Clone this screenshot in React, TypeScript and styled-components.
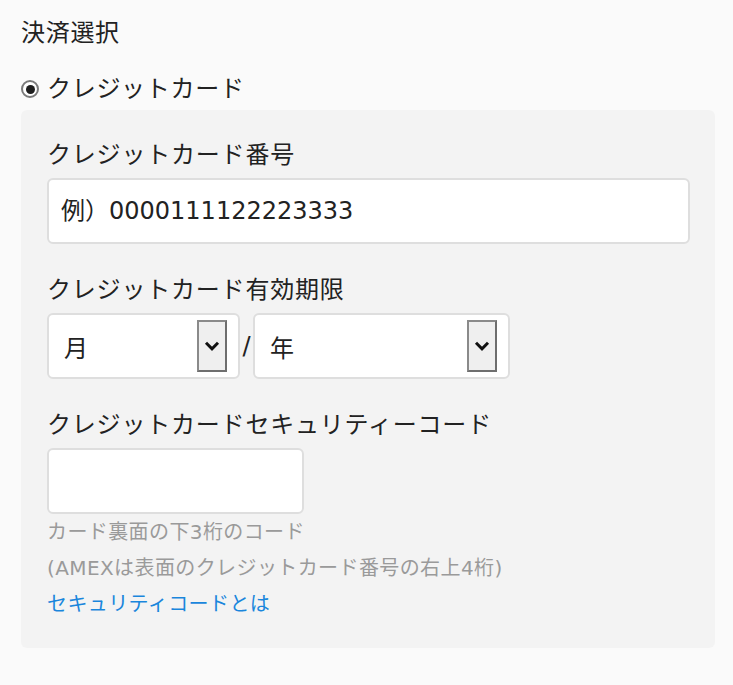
import * as React from "react";
import styled, { createGlobalStyle } from "styled-components";

const GlobalStyle = createGlobalStyle`
    html, body {
        margin: 0;
        padding: 0;
        background: #fafafa;
    }
    body {
        font-family: "DejaVu Sans", "Noto Sans CJK JP", sans-serif;
        color: #222;
    }
`;

const Page = styled.div`
    width: 733px;
    min-height: 685px;
    box-sizing: border-box;
    padding: 15px 18px 0 21px;
`;

const Title = styled.div`
    font-size: 24px;
    line-height: 36px;
    letter-spacing: 0.7px;
`;

const RadioRow = styled.label`
    display: flex;
    align-items: center;
    gap: 8px;
    margin-top: 20px;
    font-size: 24px;
    line-height: 36px;
    letter-spacing: 0.7px;
`;

const RadioMark = styled.span<{ checked: boolean }>`
    width: 18px;
    height: 18px;
    box-sizing: border-box;
    border: 2px solid #7a7a7a;
    border-radius: 50%;
    background: #fff;
    display: flex;
    align-items: center;
    justify-content: center;
    &::after {
        content: "";
        width: 9px;
        height: 9px;
        border-radius: 50%;
        background: ${props => props.checked ? "#1e1e1e" : "transparent"};
    }
`;

const Panel = styled.div`
    margin-top: 3px;
    background: #f3f3f3;
    border-radius: 6px;
    padding: 27px 25px 26px 26px;
`;

const Field = styled.div<{ first?: boolean }>`
    margin-top: ${props => props.first ? "0" : "28px"};
`;

const Label = styled.div`
    font-size: 24px;
    line-height: 36px;
    letter-spacing: 0.8px;
    margin-bottom: 5px;
`;

const TextInput = styled.input<{ w?: number }>`
    display: block;
    box-sizing: border-box;
    width: ${props => props.w ? `${props.w}px` : "100%"};
    height: 66px;
    border: 2px solid #dedede;
    border-radius: 6px;
    background: #fff;
    padding: 0 12px;
    font-family: inherit;
    font-size: 24px;
    color: #222;
    outline: none;
    &::placeholder {
        color: #222;
    }
`;

const SelectRow = styled.div`
    display: flex;
    align-items: center;
`;

const SelectBox = styled.div<{ w: number }>`
    width: ${props => props.w}px;
    height: 66px;
    box-sizing: border-box;
    border: 2px solid #dedede;
    border-radius: 6px;
    background: #fff;
    display: flex;
    align-items: center;
    justify-content: space-between;
    padding: 0 11px 0 15px;
    font-size: 24px;
`;

const ArrowButton = styled.span`
    flex: 0 0 30px;
    width: 30px;
    height: 52px;
    box-sizing: border-box;
    border: 2px solid #8a8a8a;
    border-right-color: #6e6e6e;
    border-bottom-color: #6e6e6e;
    background: #efefef;
    display: flex;
    align-items: center;
    justify-content: center;
    svg {
        flex: none;
        display: block;
    }
`;

const Slash = styled.span`
    width: 13px;
    text-align: center;
    font-size: 24px;
    line-height: 36px;
`;

const HelpText = styled.div`
    font-size: 20px;
    line-height: 36px;
    letter-spacing: 0.4px;
    color: #9a9a9a;
`;

const HelpLink = styled.a`
    display: block;
    font-size: 20px;
    line-height: 36px;
    letter-spacing: 0.4px;
    color: #1a86dc;
    text-decoration: none;
`;

const Chevron = () => (
    <svg width="16" height="10" viewBox="0 0 16 10">
        <path d="M2 1.8 L8 7.8 L14 1.8" fill="none" stroke="#111" strokeWidth="3" />
    </svg>
);

const Select = ({ w, text }: { w: number; text: string }) => (
    <SelectBox w={w}>
        <span>{text}</span>
        <ArrowButton><Chevron /></ArrowButton>
    </SelectBox>
);

export default function App() {
    return (
        <Page>
            <GlobalStyle />
            <Title>決済選択</Title>
            <RadioRow>
                <RadioMark checked={true} />
                クレジットカード
            </RadioRow>
            <Panel>
                <Field first>
                    <Label>クレジットカード番号</Label>
                    <TextInput placeholder="例）0000111122223333" />
                </Field>
                <Field>
                    <Label>クレジットカード有効期限</Label>
                    <SelectRow>
                        <Select w={193} text="月" />
                        <Slash>/</Slash>
                        <Select w={257} text="年" />
                    </SelectRow>
                </Field>
                <Field>
                    <Label>クレジットカードセキュリティーコード</Label>
                    <TextInput w={257} />
                    <div>
                        <HelpText>カード裏面の下3桁のコード</HelpText>
                        <HelpText>(AMEXは表面のクレジットカード番号の右上4桁)</HelpText>
                        <HelpLink href="#">セキュリティコードとは</HelpLink>
                    </div>
                </Field>
            </Panel>
        </Page>
    );
}
